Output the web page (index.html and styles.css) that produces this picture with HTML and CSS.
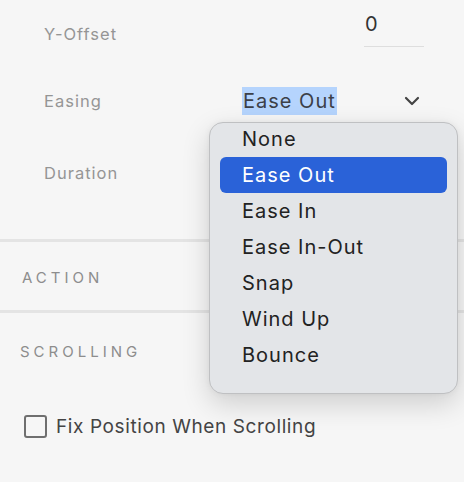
FILE: index.html
```html
<!DOCTYPE html>
<html>
<head>
<meta charset="utf-8">
<link rel="stylesheet" href="styles.css">
</head>
<body>
<div class="panel">
  <div class="row row-offset">
    <span class="label">Y-Offset</span>
    <div class="field"><span class="field-value">0</span></div>
  </div>
  <div class="row row-easing">
    <span class="label">Easing</span>
    <div class="select">
      <span class="select-value">Ease Out</span>
      <svg class="chevron" width="16" height="10" viewBox="0 0 16 10"><path d="M2 2 L8 8 L14 2" fill="none" stroke="#444" stroke-width="2.2" stroke-linecap="round" stroke-linejoin="round"/></svg>
    </div>
  </div>
  <div class="row row-duration">
    <span class="label">Duration</span>
  </div>
  <div class="divider"></div>
  <div class="section section-action"><span class="section-title">ACTION</span></div>
  <div class="divider"></div>
  <div class="section section-scroll"><span class="section-title">SCROLLING</span></div>
  <label class="check-row">
    <span class="checkbox"></span>
    <span class="check-label">Fix Position When Scrolling</span>
  </label>
</div>
<ul class="menu">
  <li class="menu-item">None</li>
  <li class="menu-item selected">Ease Out</li>
  <li class="menu-item">Ease In</li>
  <li class="menu-item">Ease In-Out</li>
  <li class="menu-item">Snap</li>
  <li class="menu-item">Wind Up</li>
  <li class="menu-item">Bounce</li>
</ul>
</body>
</html>
```

FILE: styles.css
```css
html, body {
  margin: 0;
  padding: 0;
  background: #f6f6f6;
  width: 464px;
  height: 482px;
  overflow: hidden;
  font-family: Inter, "Open Sans", sans-serif;
}
.panel {
  display: flex;
  flex-direction: column;
}
.row {
  display: flex;
  align-items: center;
  padding-left: 44px;
  position: relative;
}
.row-offset { height: 68px; }
.row-easing { height: 66px; }
.row-duration { height: 78px; margin-bottom: 27px; }
.label {
  font-size: 16.5px;
  letter-spacing: 1px;
  color: #959595;
  flex: 1;
}
.field {
  width: 60px;
  margin-right: 40px;
  align-self: flex-start;
  margin-top: 12px;
  height: 34px;
  border-bottom: 1px solid #dedede;
}
.field-value {
  font-size: 20px;
  color: #333;
  padding-left: 1px;
}
.select {
  display: flex;
  align-items: center;
  width: 222px;
}
.select-value {
  font-size: 20px;
  letter-spacing: 1px;
  color: #3c4048;
  background: #b5d4fd;
  padding: 3px 1px 3px 1px;
  line-height: 22px;
}
.chevron {
  margin-left: auto;
  margin-right: 44px;
}
.divider {
  height: 3px;
  background: #e4e4e4;
}
.section {
  display: flex;
  align-items: center;
}
.section-action { height: 66px; padding-top: 2px; padding-left: 22px; }
.section-scroll { height: 76px; padding-left: 20px; }
.section-title {
  font-size: 15px;
  letter-spacing: 4px;
  color: #8d8d8d;
}
.check-row {
  display: flex;
  align-items: center;
  padding-left: 24px;
  height: 74px;
}
.checkbox {
  width: 19px;
  height: 19px;
  border: 2px solid #6f6f6f;
  border-radius: 3px;
  box-sizing: content-box;
}
.check-label {
  font-size: 19px;
  letter-spacing: 0.6px;
  color: #444;
  margin-left: 9px;
}
.menu {
  position: absolute;
  left: 209px;
  top: 122px;
  width: 249px;
  height: 272px;
  margin: 0;
  padding: 0 10px;
  list-style: none;
  box-sizing: border-box;
  background: #e3e5e8;
  border: 1px solid #bfc0c2;
  border-radius: 14px;
  box-shadow: 0 10px 28px rgba(0,0,0,0.16), 0 0 6px rgba(0,0,0,0.05);
}
.menu-item {
  height: 36px;
  line-height: 36px;
  font-size: 20px;
  letter-spacing: 1px;
  color: #222;
  padding-left: 22px;
  border-radius: 6px;
}
.menu-item:first-child {
  margin-top: -2px;
}
.menu-item.selected {
  background: #2a62d8;
  color: #fff;
}
```
